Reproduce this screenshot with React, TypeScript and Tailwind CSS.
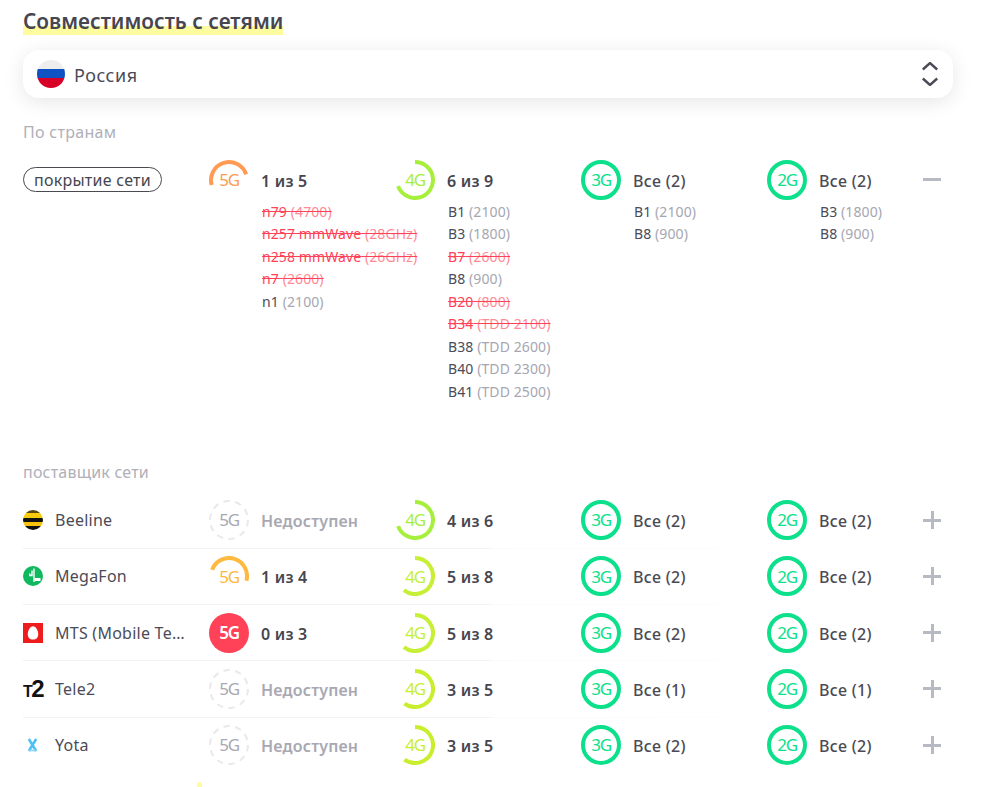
import React from "react";

function polar(r: number, deg: number) {
  const a = ((deg - 90) * Math.PI) / 180;
  return `${(20 + r * Math.cos(a)).toFixed(2)} ${(20 + r * Math.sin(a)).toFixed(2)}`;
}

type RingProps = {
  label: string;
  color: string;
  from?: number;
  to?: number;
  kind?: "arc" | "full" | "dashed" | "solid";
};

function Ring({ label, color, from = 0, to = 360, kind = "arc" }: RingProps) {
  const r = 18;
  return (
    <div className="relative h-10 w-10 shrink-0">
      <svg width="40" height="40" viewBox="0 0 40 40" className="block">
        {kind === "solid" && <circle cx="20" cy="20" r="20" fill={color} />}
        {kind === "full" && <circle cx="20" cy="20" r={r} fill="none" stroke={color} strokeWidth="4" />}
        {kind === "dashed" && (
          <circle cx="20" cy="20" r="19" fill="none" stroke="#e9e9ec" strokeWidth="2" strokeDasharray="6.4 5.5" />
        )}
        {kind === "arc" && (
          <path
            d={`M ${polar(r, from)} A ${r} ${r} 0 ${to - from > 180 ? 1 : 0} 1 ${polar(r, to)}`}
            fill="none"
            stroke={color}
            strokeWidth="4"
          />
        )}
      </svg>
      <span
        className={`absolute inset-0 flex items-center justify-center text-[17px] tracking-[-1.2px] ${kind === "solid" ? "font-semibold" : ""}`}
        style={{ color: kind === "solid" ? "#fff" : kind === "dashed" ? "#a9a9b3" : color }}
      >
        {label}
      </span>
    </div>
  );
}

type Band = [string, string, boolean?];

function Bands({ items }: { items: Band[] }) {
  return (
    <ul className="mt-[0.5px] ml-[53px] text-[14px] leading-[22.5px] tracking-[0.1px] whitespace-nowrap">
      {items.map(([a, b, off]) => (
        <li key={a} className={off ? "text-[#ff4257] line-through" : "text-[#4b4b57]"}>
          {a} <span className={off ? "text-[#ff8b97]" : "text-[#a6a6b2]"}>{b}</span>
        </li>
      ))}
    </ul>
  );
}

function Cell({ ring, text, muted, light }: { ring: RingProps; text: string; muted?: boolean; light?: boolean }) {
  return (
    <div className="flex items-center gap-3">
      <Ring {...ring} />
      {light ? (
        <span className="mt-[2px] text-[16px] font-medium tracking-[0.3px] whitespace-nowrap text-[#4b4b55]">{text}</span>
      ) : (
        <span
          className={`mt-[2px] text-[16px] font-semibold tracking-[0.2px] whitespace-nowrap ${muted ? "text-[#a8a8b2]" : "text-[#46464f]"}`}
        >
          {text}
        </span>
      )}
    </div>
  );
}

function Beeline() {
  return (
    <div className="flex h-5 w-5 shrink-0 flex-col overflow-hidden rounded-full">
      <div className="h-[3px] bg-[#5a4a10]" />
      <div className="h-[5px] bg-[#fbcb10]" />
      <div className="h-[4px] bg-[#111]" />
      <div className="h-[4px] bg-[#f6c20d]" />
      <div className="h-[4px] bg-[#111]" />
    </div>
  );
}

function MegaFon() {
  return (
    <svg width="20" height="20" viewBox="0 0 20 20" className="block shrink-0">
      <circle cx="10" cy="10" r="10" fill="#10b95f" />
      <path d="M9 4.5V9.5H6.8V7.5" fill="none" stroke="#fff" strokeWidth="1.4" />
      <path d="M11 2.5V16" fill="none" stroke="#fff" strokeWidth="1.4" />
      <rect x="11.5" y="12" width="6" height="3" fill="#fff" />
    </svg>
  );
}

function Mts() {
  return (
    <svg width="20" height="20" viewBox="0 0 20 20" className="block shrink-0">
      <rect width="20" height="20" fill="#ee1c1c" />
      <path d="M10 3.2C13 3.2 15.2 7.6 15.2 11.2C15.2 14.8 13 16.6 10 16.6C7 16.6 4.8 14.8 4.8 11.2C4.8 7.6 7 3.2 10 3.2Z" fill="#fff" />
    </svg>
  );
}

function Tele2() {
  return (
    <div className="flex h-[17px] w-5 shrink-0 items-baseline font-['Liberation_Sans',sans-serif] font-bold text-[#111]">
      <span className="text-[16px] leading-[17px] tracking-[-1.5px]">T</span>
      <span className="text-[24px] leading-[17px]">2</span>
    </div>
  );
}

function Yota() {
  return (
    <svg width="20" height="20" viewBox="0 0 20 20" className="block shrink-0">
      <path d="M5.8 4L13.2 16M13.2 4L5.8 16" fill="none" stroke="#4fc0f5" strokeWidth="2.6" />
      <path d="M5.5 15.5H13.5" fill="none" stroke="#8ad6f8" strokeWidth="1.6" />
    </svg>
  );
}

const full3: RingProps = { label: "3G", color: "#0ce08b", kind: "full" };
const full2: RingProps = { label: "2G", color: "#0ce08b", kind: "full" };
const no5: RingProps = { label: "5G", color: "#a9a9b3", kind: "dashed" };
const g46: RingProps = { label: "4G", color: "#a7ef3d", from: 0, to: 250 };
const g58: RingProps = { label: "4G", color: "#c6ef36", from: 0, to: 218 };
const g35: RingProps = { label: "4G", color: "#c9ee2e", from: 0, to: 216 };

const providers = [
  { name: "Beeline", logo: <Beeline />, five: no5, fiveText: "Недоступен", muted: true, four: g46, fourText: "4 из 6", all: "Все (2)" },
  { name: "MegaFon", logo: <MegaFon />, five: { label: "5G", color: "#ffb93f", from: -70, to: 105 } as RingProps, fiveText: "1 из 4", muted: false, four: g58, fourText: "5 из 8", all: "Все (2)" },
  { name: "MTS (Mobile TeleSystems)", logo: <Mts />, five: { label: "5G", color: "#ff4257", kind: "solid" } as RingProps, fiveText: "0 из 3", muted: false, four: g58, fourText: "5 из 8", all: "Все (2)" },
  { name: "Tele2", logo: <Tele2 />, five: no5, fiveText: "Недоступен", muted: true, four: g35, fourText: "3 из 5", all: "Все (1)" },
  { name: "Yota", logo: <Yota />, five: no5, fiveText: "Недоступен", muted: true, four: g35, fourText: "3 из 5", all: "Все (2)" },
];

export default function App() {
  return (
    <div className="h-[787px] w-[996px] overflow-hidden bg-white pl-[23px] font-['Noto_Sans','Open_Sans',sans-serif] text-[#46464f]">
      <div className="w-[930px]">
        <h1 className="mt-[8px] inline-block bg-[linear-gradient(transparent_18px,#fdfd9f_18px,#fdfd9f_27px,transparent_27px)] text-[20.8px] leading-[27px] font-semibold">
          Совместимость с сетями
        </h1>

        <div className="mt-[15px] flex h-12 items-center rounded-2xl bg-white pr-[15px] pl-[14px] shadow-[0_4px_20px_rgba(0,0,0,0.1)]">
          <div className="flex h-7 w-7 flex-col overflow-hidden rounded-full">
            <div className="h-[9px] bg-[#eeeeee]" />
            <div className="h-[9px] bg-[#0f52c4]" />
            <div className="h-[10px] bg-[#d80027]" />
          </div>
          <span className="mt-[2px] ml-[9px] text-[18px] tracking-[0.5px] text-[#4b4b57]">Россия</span>
          <svg width="16" height="24" viewBox="0 0 16 24" className="ml-auto block">
            <path d="M0.8 7.5L8 1L15.2 7.5M0.8 16.5L8 23L15.2 16.5" fill="none" stroke="#4b4b57" strokeWidth="2.4" />
          </svg>
        </div>

        <p className="mt-[22px] text-[16px] leading-[24px] tracking-[0.3px] text-[#b0afb8]">По странам</p>

        <div className="mt-4 grid h-[300px] grid-cols-[186px_186px_186px_186px_186px]">
          <div className="pt-[7px]">
            <span className="inline-block h-[25px] rounded-full border border-[#4a4a50] px-[10px] text-[16px] leading-[24px] tracking-[0.25px]">
              покрытие сети
            </span>
          </div>
          <div>
            <Cell ring={{ label: "5G", color: "#ff9b52", from: -106, to: 72 }} text="1 из 5" />
            <Bands
              items={[
                ["n79", "(4700)", true],
                ["n257 mmWave", "(28GHz)", true],
                ["n258 mmWave", "(26GHz)", true],
                ["n7", "(2600)", true],
                ["n1", "(2100)"],
              ]}
            />
          </div>
          <div>
            <Cell ring={g46} text="6 из 9" />
            <Bands
              items={[
                ["B1", "(2100)"],
                ["B3", "(1800)"],
                ["B7", "(2600)", true],
                ["B8", "(900)"],
                ["B20", "(800)", true],
                ["B34", "(TDD 2100)", true],
                ["B38", "(TDD 2600)"],
                ["B40", "(TDD 2300)"],
                ["B41", "(TDD 2500)"],
              ]}
            />
          </div>
          <div>
            <Cell ring={full3} text="Все (2)" light />
            <Bands items={[["B1", "(2100)"], ["B8", "(900)"]]} />
          </div>
          <div>
            <div className="flex items-center">
              <Cell ring={full2} text="Все (2)" light />
              <div className="mr-3 mb-[2px] ml-auto h-[3px] w-[18px] bg-[#b7b9c3]" />
            </div>
            <Bands items={[["B3", "(1800)"], ["B8", "(900)"]]} />
          </div>
        </div>

        <p className="text-[16px] leading-[24px] tracking-[0.2px] text-[#b0afb8]">поставщик сети</p>

        <div className="mt-[8.5px]">
          {providers.map((p, i) => (
            <div key={p.name}>
              {i > 0 && (
                <div className="h-px w-[694px] bg-[linear-gradient(to_right,#f3f3f3,#f3f3f3_67%,#fbfbfb_68%,#fcfcfc)]" />
              )}
              <div className="grid h-[55.25px] grid-cols-[186px_186px_186px_186px_186px] items-center">
                <div className="flex items-center gap-3 pr-[21px]">
                  {p.logo}
                  <span className="truncate text-[16px] tracking-[0.25px] text-[#4b4b57]">{p.name}</span>
                </div>
                <Cell ring={p.five} text={p.fiveText} muted={p.muted} />
                <Cell ring={p.four} text={p.fourText} />
                <Cell ring={full3} text={p.all} light />
                <div className="flex items-center">
                  <Cell ring={full2} text={p.all} light />
                  <div className="relative mr-3 ml-auto h-[18px] w-[18px]">
                    <div className="absolute top-[7.5px] left-0 h-[3px] w-[18px] bg-[#b7b9c3]" />
                    <div className="absolute top-0 left-[7.5px] h-[18px] w-[3px] bg-[#b7b9c3]" />
                  </div>
                </div>
              </div>
            </div>
          ))}
        </div>

        <div className="mt-[9.5px] ml-[174px] h-[6px] w-[5px] rounded-t-full bg-[#fdfd9f]" />
      </div>
    </div>
  );
}
